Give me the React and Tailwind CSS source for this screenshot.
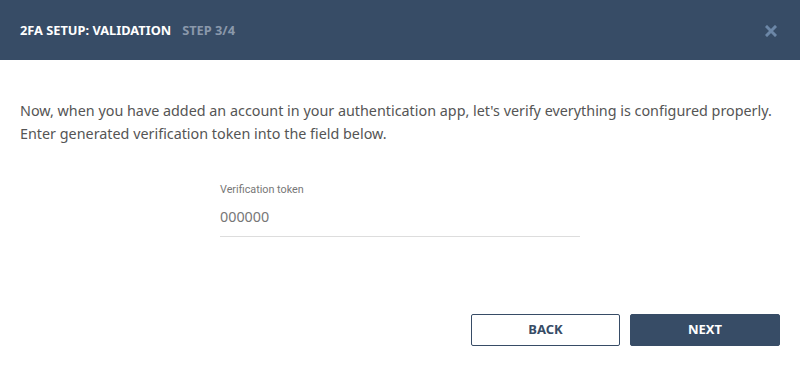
import React from "react";

export default function App() {
  return (
    <div
      className="w-[800px] h-[365px] bg-white flex flex-col"
      style={{ fontFamily: '"Noto Sans", sans-serif' }}
    >
      <div className="h-[60px] bg-[#374c66] flex items-center justify-between pl-5 pr-[23px] pt-[2px] shrink-0">
        <div className="flex items-center gap-[11px] text-[12.8px] font-bold">
          <span className="text-white">2FA SETUP: VALIDATION</span>
          <span className="text-[#8a98ab]">STEP 3/4</span>
        </div>
        <svg width="12" height="12" viewBox="0 0 12 12">
          <path d="M2 2 L10 10 M10 2 L2 10" stroke="#6c87a7" strokeWidth="3" strokeLinecap="square" />
        </svg>
      </div>
      <div className="flex-1 flex flex-col px-5 pt-[39px]">
        <p className="text-[14.35px] leading-[23px] text-[#555]">
          Now, when you have added an account in your authentication app, let's verify everything is configured properly.
          <br />
          Enter generated verification token into the field below.
        </p>
        <div className="w-[360px] mx-auto mt-[38px] flex flex-col">
          <label
            className="text-[10.8px] leading-[14px] text-[#777]"
            style={{ fontFamily: "Roboto, sans-serif" }}
          >
            Verification token
          </label>
          <input
            className="mt-[8px] h-[32px] pb-[9px] text-[14.35px] text-[#777] placeholder-[#777] outline-none border-b border-[#ddd]"
            placeholder="000000"
          />
        </div>
        <div className="mt-auto mb-[19px] flex justify-end gap-[10px]">
          <button className="w-[149px] h-[32px] border border-[#374c66] rounded-[2px] text-[13px] font-bold text-[#374c66] bg-white">
            BACK
          </button>
          <button className="w-[150px] h-[32px] border border-[#374c66] rounded-[2px] text-[13px] font-bold text-white bg-[#374c66]">
            NEXT
          </button>
        </div>
      </div>
    </div>
  );
}
